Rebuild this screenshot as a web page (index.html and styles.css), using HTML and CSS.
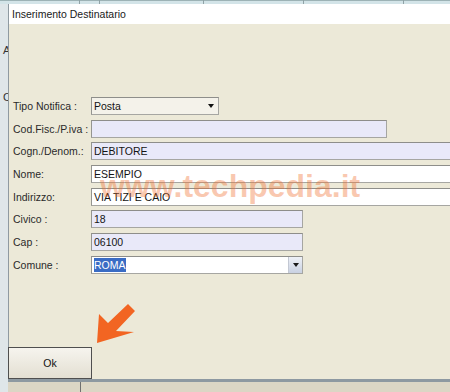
FILE: index.html
```html
<!DOCTYPE html>
<html lang="it">
<head>
<meta charset="utf-8">
<title>Inserimento Destinatario</title>
<link rel="stylesheet" href="styles.css">
</head>
<body>
<div class="screen">
  <div class="top-strip">
    <span class="col w80"></span>
    <span class="col w20"></span>
    <span class="col w104"></span>
    <span class="col w100"></span>
    <span class="col w100"></span>
    <span class="col rest"></span>
  </div>
  <div class="main">
    <div class="left-strip">
      <span class="ghost ghost-a">A</span>
      <span class="ghost ghost-c">C</span>
    </div>
    <div class="right">
      <div class="dialog">
        <div class="titlebar">Inserimento Destinatario</div>
        <div class="dlg-body">
          <div class="form">
            <span class="lbl">Tipo Notifica :</span>
            <div class="field select w128">Posta<span class="caret"></span></div>

            <span class="lbl">Cod.Fisc./P.iva :</span>
            <div class="field lav w296"></div>

            <span class="lbl">Cogn./Denom.:</span>
            <div class="field lav wide">DEBITORE</div>

            <span class="lbl">Nome:</span>
            <div class="field white wide">ESEMPIO</div>

            <span class="lbl">Indirizzo:</span>
            <div class="field white wide">VIA TIZI E CAIO</div>

            <span class="lbl">Civico :</span>
            <div class="field lav w212">18</div>

            <span class="lbl">Cap :</span>
            <div class="field lav w212">06100</div>

            <span class="lbl">Comune :</span>
            <div class="field white combo w212"><span class="sel">ROMA</span><span class="combo-btn"><span class="caret-sm"></span></span></div>
          </div>
          <div class="footer">
            <button class="ok" type="button">Ok</button>
          </div>
          <div class="watermark">www.techpedia.it</div>
          <svg class="arrow" width="42" height="44" viewBox="0 0 42 44" aria-hidden="true">
            <polygon points="2,41 4,12 13,21 33,2 40,9 21,29 39,30" fill="#f26522"/>
          </svg>
        </div>
      </div>
      <div class="under-line"></div>
      <div class="under"><span class="under-sep"></span></div>
    </div>
  </div>
</div>
</body>
</html>
```
FILE: styles.css
```css
html, body {
  margin: 0;
  padding: 0;
}
body {
  width: 450px;
  height: 392px;
  overflow: hidden;
  font-family: "Liberation Sans", Arial, sans-serif;
}
.screen {
  width: 450px;
  height: 392px;
  overflow: hidden;
  background: #dfe6e9;
  display: flex;
  flex-direction: column;
}
.top-strip {
  height: 4px;
  display: flex;
  background: linear-gradient(#9cb2b5 0, #9cb2b5 1px, #d3e4e8 1px);
  flex: none;
}
.col {
  box-sizing: border-box;
  height: 4px;
  border-right: 1px solid #8fa2a6;
}
.w80 { width: 80px; }
.w20 { width: 20px; }
.w104 { width: 104px; }
.w100 { width: 100px; }
.rest { flex: 1; border-right: none; }

.main {
  flex: 1;
  display: flex;
}
.left-strip {
  width: 8px;
  flex: none;
  overflow: hidden;
  background: #dfe6e9;
  display: flex;
  flex-direction: column;
  padding-top: 40px;
  box-sizing: border-box;
}
.ghost {
  font-size: 11px;
  line-height: 12px;
  color: #333;
  padding-left: 3px;
}
.ghost-c {
  margin-top: 35px;
}
.right {
  flex: 1;
  display: flex;
  flex-direction: column;
  min-width: 0;
}
.dialog {
  height: 375px;
  box-sizing: border-box;
  border-left: 1px solid #8f9aa1;
  background: #ece9d8;
  display: flex;
  flex-direction: column;
}
.titlebar {
  height: 20px;
  flex: none;
  background: #ffffff;
  padding-left: 3px;
  font-size: 10.5px;
  line-height: 20px;
  color: #1a1a1a;
}
.dlg-body {
  flex: 1;
  position: relative;
  display: flex;
  flex-direction: column;
  padding-top: 73px;
}
.form {
  padding-left: 4px;
  display: grid;
  grid-template-columns: 78px max-content;
  grid-auto-rows: 18px;
  row-gap: 4.7px;
  align-items: center;
}
.lbl {
  font-size: 10.5px;
  color: #2a2a2a;
  white-space: nowrap;
}
.field {
  position: relative;
  box-sizing: border-box;
  height: 18px;
  border: 1px solid #a6a6a2;
  border-top-color: #8e8e8a;
  border-left-color: #959591;
  padding-left: 2px;
  font-size: 10.5px;
  line-height: 16px;
  color: #141414;
  white-space: nowrap;
}
.lav { background: #e9e9f9; }
.white { background: #ffffff; }
.select { background: #f4f2ea; }
.w128 { width: 128px; }
.w296 { width: 296px; }
.w212 { width: 212px; }
.wide { width: 380px; }

.caret {
  position: absolute;
  right: 4px;
  top: 6px;
  width: 0;
  height: 0;
  border-left: 3px solid transparent;
  border-right: 3px solid transparent;
  border-top: 4px solid #111;
}
.sel {
  background: #3a6cc4;
  color: #ffffff;
  padding: 1px 0;
}
.combo-btn {
  position: absolute;
  right: 0;
  top: 0;
  bottom: 0;
  width: 13px;
  background: linear-gradient(#eef1f7, #c9d1e2);
  border-left: 1px solid #c3c8d3;
  display: flex;
  align-items: center;
  justify-content: center;
}
.caret-sm {
  width: 0;
  height: 0;
  border-left: 3px solid transparent;
  border-right: 3px solid transparent;
  border-top: 4px solid #1a1a1a;
}
.footer {
  margin-top: auto;
}
.ok {
  display: block;
  margin: 0 0 0 -1px;
  width: 84px;
  height: 32px;
  border: 1px solid #4f4f4f;
  border-radius: 0;
  background: linear-gradient(#f6f4ee, #e3dfd2);
  font-family: "Liberation Sans", Arial, sans-serif;
  font-size: 10.5px;
  color: #111;
  padding: 0;
}
.watermark {
  position: absolute;
  left: 91px;
  top: 146px;
  font-size: 32px;
  line-height: 32px;
  font-weight: bold;
  color: rgba(240, 110, 45, 0.38);
  white-space: nowrap;
  pointer-events: none;
}
.arrow {
  position: absolute;
  left: 86px;
  top: 278px;
}
.under-line {
  height: 3px;
  flex: none;
  background: #8d99a1;
}
.under {
  flex: 1;
  background: #dbd6c5;
  padding-left: 72px;
  display: flex;
}
.under-sep {
  width: 1px;
  background: #707070;
}
```
